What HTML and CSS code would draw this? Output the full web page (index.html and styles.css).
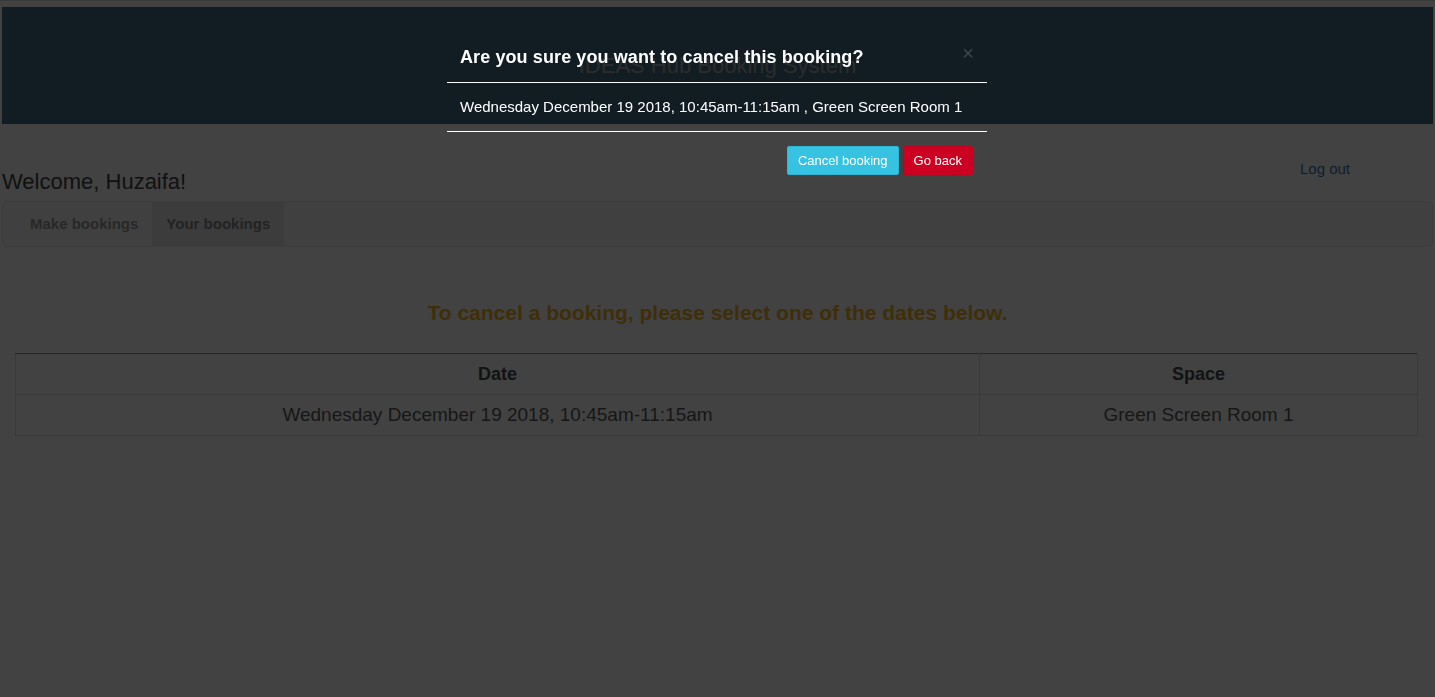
FILE: index.html
```html
<!DOCTYPE html>
<html>
<head>
<meta charset="utf-8">
<link rel="stylesheet" href="styles.css">
</head>
<body>
<div class="topline"></div>
<div class="page">
  <header class="site-header">
    <h1 class="site-title">IDEAS Hub Booking System</h1>
  </header>
  <div class="user-row">
    <h2 class="welcome">Welcome, Huzaifa!</h2>
    <a class="logout" href="#">Log out</a>
  </div>
  <nav class="navbar">
    <ul class="tabs">
      <li class="tab">Make bookings</li>
      <li class="tab active">Your bookings</li>
    </ul>
  </nav>
  <p class="notice">To cancel a booking, please select one of the dates below.</p>
  <table class="bookings">
    <thead>
      <tr><th class="col-date">Date</th><th>Space</th></tr>
    </thead>
    <tbody>
      <tr><td>Wednesday December 19 2018, 10:45am-11:15am</td><td>Green Screen Room 1</td></tr>
    </tbody>
  </table>
</div>
<div class="backdrop"></div>
<div class="modal">
  <div class="modal-content">
    <div class="modal-header">
      <h3 class="modal-title">Are you sure you want to cancel this booking?</h3>
      <span class="close">&times;</span>
    </div>
    <div class="modal-body">Wednesday December 19 2018, 10:45am-11:15am , Green Screen Room 1</div>
    <div class="modal-footer">
      <button class="btn btn-info">Cancel booking</button>
      <button class="btn btn-danger">Go back</button>
    </div>
  </div>
</div>
</body>
</html>
```

FILE: styles.css
```css
html, body {
  margin: 0;
  padding: 0;
  background: #ffffff;
  font-family: "Liberation Sans", Arial, sans-serif;
  color: #333;
}
.topline {
  height: 1px;
  background: #dadada;
}
.page {
  padding: 6px 2px 0 2px;
  height: 690px;
  box-sizing: border-box;
}
.site-header {
  height: 117px;
  background: #457087;
  display: flex;
  justify-content: center;
}
.site-title {
  margin: 0;
  padding-top: 46px;
  font-size: 22px;
  font-weight: normal;
  color: #ababab;
}
.user-row {
  display: flex;
  justify-content: space-between;
  align-items: flex-start;
  height: 77px;
}
.welcome {
  margin: 0;
  padding-top: 45px;
  font-size: 22px;
  font-weight: normal;
  color: #444;
}
.logout {
  margin-top: 36px;
  margin-right: 83px;
  font-size: 15px;
  color: #337ab7;
  text-decoration: none;
}
.navbar {
  height: 46px;
  box-sizing: border-box;
  background: #f8f8f8;
  border: 1px solid #e7e7e7;
  border-radius: 4px;
  padding-left: 13px;
  display: flex;
}
.tabs {
  list-style: none;
  margin: 0;
  padding: 0;
  display: flex;
}
.tab {
  padding: 0 14px;
  line-height: 44px;
  font-size: 15px;
  font-weight: bold;
  color: #9a9a9a;
}
.tab.active {
  background: #e7e7e7;
  color: #888;
}
.notice {
  margin: 54px 0 0 0;
  text-align: center;
  font-size: 21px;
  font-weight: bold;
  color: #f2b32a;
}
.bookings {
  margin: 28px 15px 0 13px;
  width: calc(100% - 28px);
  border-collapse: collapse;
  font-size: 19px;
  border-top: 1px solid #8c8c8c;
}
.bookings th, .bookings td {
  border: 1px solid #dcdcdc;
  text-align: center;
  height: 40px;
  padding: 0;
  color: #5a5a5a;
}
.bookings tr:first-child th {
  border-top: 1px solid #8c8c8c;
}
.bookings th {
  font-weight: bold;
  font-size: 18px;
  color: #4a4a4a;
}
.col-date {
  width: 963px;
}
.backdrop {
  position: fixed;
  inset: 0;
  background: rgba(0, 0, 0, 0.74);
}
.modal {
  position: fixed;
  top: 0;
  left: 447px;
  width: 540px;
}
.modal-content {
  color: #fff;
}
.modal-header {
  position: relative;
  height: 83px;
  box-sizing: border-box;
  border-bottom: 1px solid #fff;
  padding: 46px 13px 0 13px;
}
.modal-title {
  margin: 0;
  font-size: 18px;
  font-weight: bold;
  line-height: 22px;
  letter-spacing: 0.1px;
}
.close {
  position: absolute;
  right: 13px;
  top: 42px;
  font-size: 20px;
  color: #3a4a52;
}
.modal-body {
  height: 49px;
  box-sizing: border-box;
  border-bottom: 1px solid #fff;
  padding: 15px 13px 0 13px;
  font-size: 15px;
  line-height: 18px;
}
.modal-footer {
  display: flex;
  justify-content: flex-end;
  gap: 4px;
  padding: 14px 14px 0 0;
}
.btn {
  height: 29px;
  border-radius: 2px;
  font-family: "Liberation Sans", Arial, sans-serif;
  font-size: 13px;
  color: #fff;
  padding: 0 10px;
  cursor: pointer;
}
.btn-info {
  background: #36c3e1;
  border: 1px solid #2eb6d3;
}
.btn-danger {
  background: #cc0020;
  border: 1px solid #c0001c;
}
```
